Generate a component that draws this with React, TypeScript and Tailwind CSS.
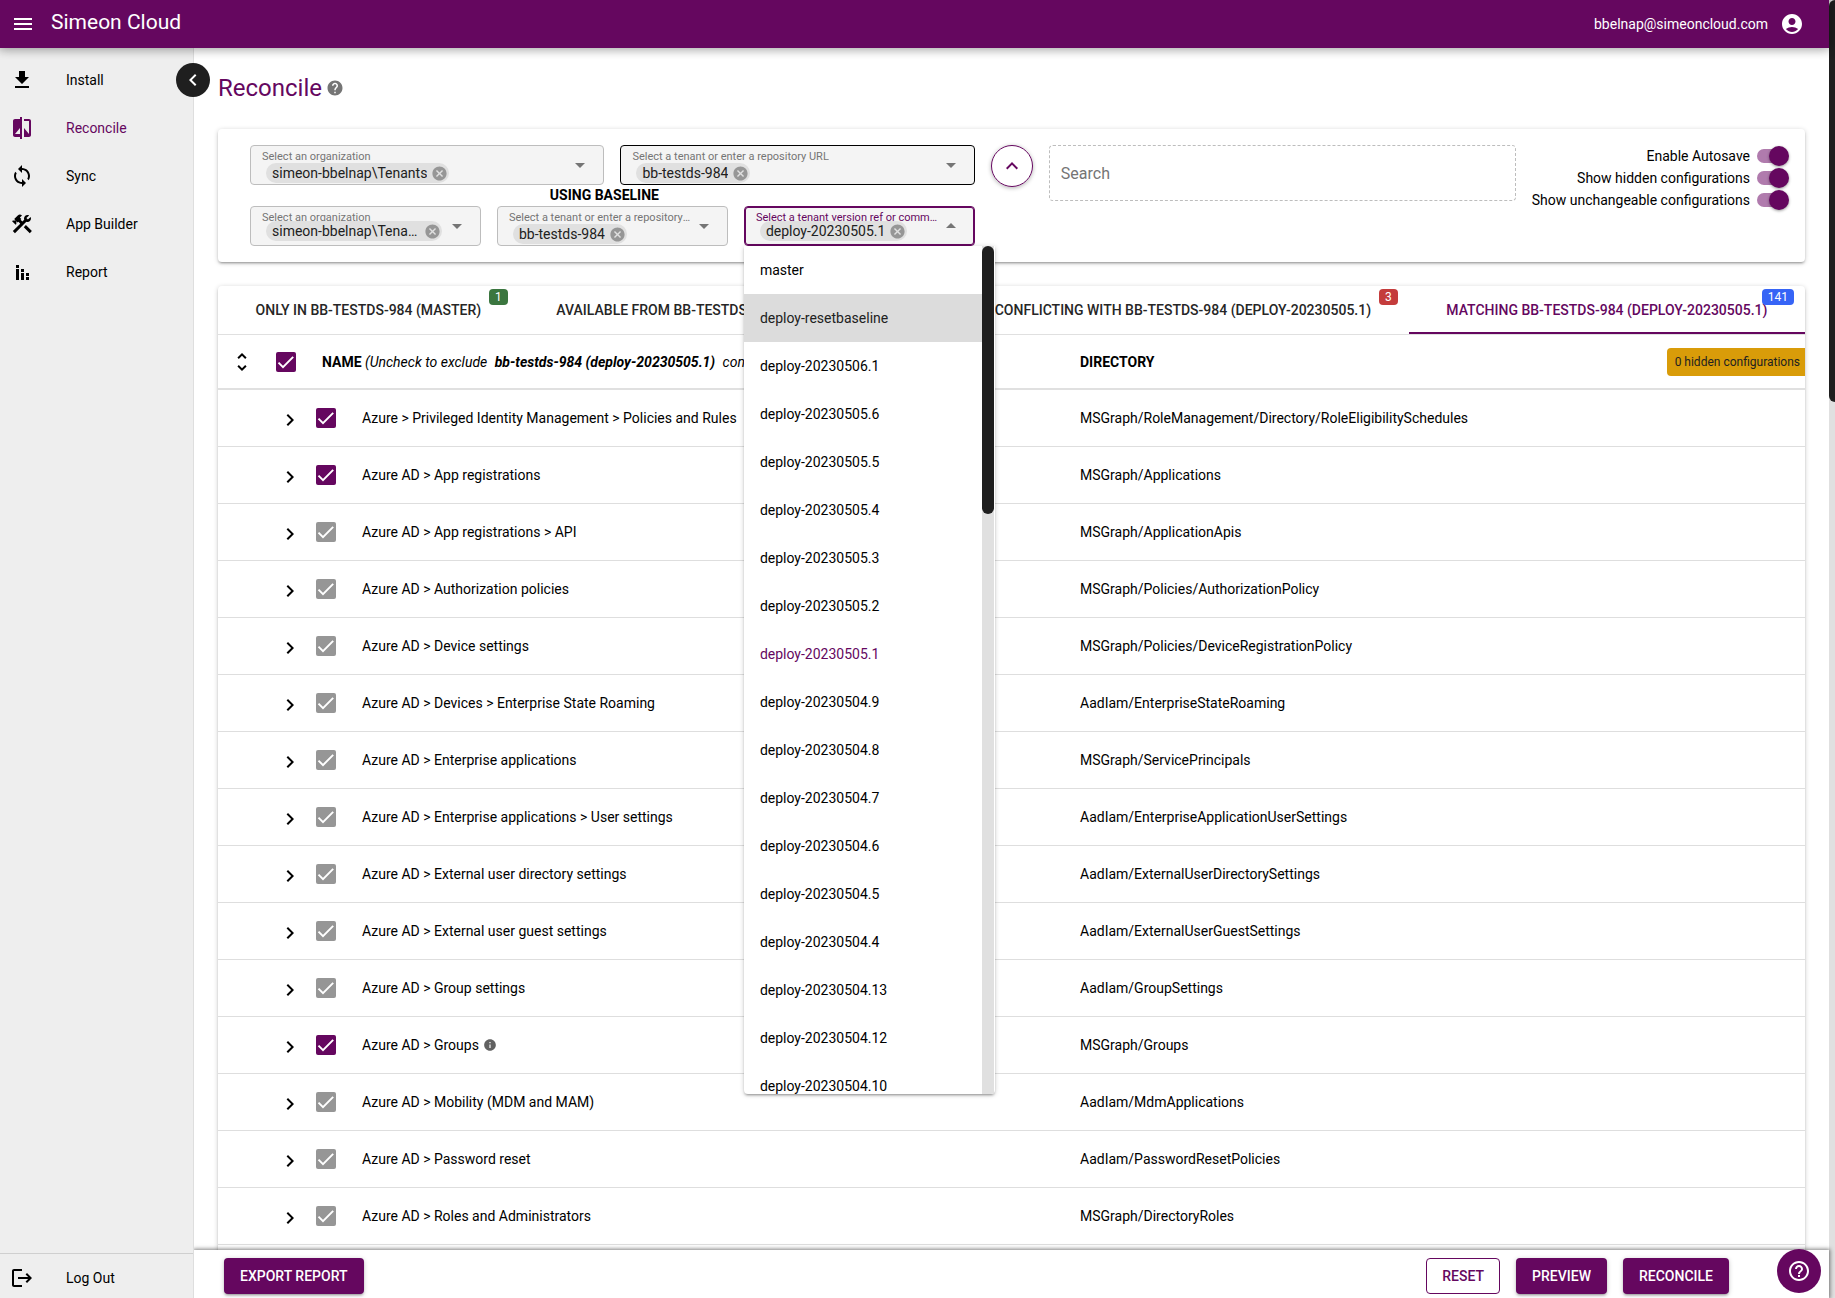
import React from "react";
import {
  MdMenu,
  MdAccountCircle,
  MdGetApp,
  MdCompare,
  MdSync,
  MdConstruction,
  MdLogout,
  MdChevronLeft,
  MdChevronRight,
  MdExpandLess,
  MdHelp,
  MdHelpOutline,
  MdCancel,
  MdArrowDropDown,
  MdArrowDropUp,
  MdUnfoldMore,
  MdInfo,
} from "react-icons/md";

function ReportIcon({ className }: { className?: string }) {
  return (
    <svg viewBox="0 0 24 24" className={className} fill="currentColor">
      <path d="M6 5h3v3H6zM6 9h3v11H6zM11 9h3v3h-3zM11 13h3v7h-3zM16 13h3v3h-3zM16 17h3v3h-3z" />
    </svg>
  );
}

const NAV = [
  { label: "Install", Icon: MdGetApp, active: false },
  { label: "Reconcile", Icon: MdCompare, active: true },
  { label: "Sync", Icon: MdSync, active: false },
  { label: "App Builder", Icon: MdConstruction, active: false },
  { label: "Report", Icon: ReportIcon, active: false },
];

const TABS = [
  { label: "ONLY IN BB-TESTDS-984 (MASTER)", count: "1", badge: "bg-[#3b763f]", active: false },
  { label: "AVAILABLE FROM BB-TESTDS-984 (DEPLOY-20230505.1)", count: "", badge: "", active: false },
  { label: "CONFLICTING WITH BB-TESTDS-984 (DEPLOY-20230505.1)", count: "3", badge: "bg-[#c43c3c]", active: false },
  { label: "MATCHING BB-TESTDS-984 (DEPLOY-20230505.1)", count: "141", badge: "bg-[#3664f6]", active: true },
];

const REFS = [
  "master",
  "deploy-resetbaseline",
  "deploy-20230506.1",
  "deploy-20230505.6",
  "deploy-20230505.5",
  "deploy-20230505.4",
  "deploy-20230505.3",
  "deploy-20230505.2",
  "deploy-20230505.1",
  "deploy-20230504.9",
  "deploy-20230504.8",
  "deploy-20230504.7",
  "deploy-20230504.6",
  "deploy-20230504.5",
  "deploy-20230504.4",
  "deploy-20230504.13",
  "deploy-20230504.12",
  "deploy-20230504.10",
];

type Row = { name: string; dir: string; editable?: boolean; info?: boolean };

const ROWS: Row[] = [
  { name: "Azure > Privileged Identity Management > Policies and Rules", dir: "MSGraph/RoleManagement/Directory/RoleEligibilitySchedules", editable: true },
  { name: "Azure AD > App registrations", dir: "MSGraph/Applications", editable: true },
  { name: "Azure AD > App registrations > API", dir: "MSGraph/ApplicationApis" },
  { name: "Azure AD > Authorization policies", dir: "MSGraph/Policies/AuthorizationPolicy" },
  { name: "Azure AD > Device settings", dir: "MSGraph/Policies/DeviceRegistrationPolicy" },
  { name: "Azure AD > Devices > Enterprise State Roaming", dir: "AadIam/EnterpriseStateRoaming" },
  { name: "Azure AD > Enterprise applications", dir: "MSGraph/ServicePrincipals" },
  { name: "Azure AD > Enterprise applications > User settings", dir: "AadIam/EnterpriseApplicationUserSettings" },
  { name: "Azure AD > External user directory settings", dir: "AadIam/ExternalUserDirectorySettings" },
  { name: "Azure AD > External user guest settings", dir: "AadIam/ExternalUserGuestSettings" },
  { name: "Azure AD > Group settings", dir: "AadIam/GroupSettings" },
  { name: "Azure AD > Groups", dir: "MSGraph/Groups", editable: true, info: true },
  { name: "Azure AD > Mobility (MDM and MAM)", dir: "AadIam/MdmApplications" },
  { name: "Azure AD > Password reset", dir: "AadIam/PasswordResetPolicies" },
  { name: "Azure AD > Roles and Administrators", dir: "MSGraph/DirectoryRoles" },
];

function Check({ label, disabled = false }: { label: string; disabled?: boolean }) {
  return (
    <span className="grid size-5 shrink-0">
      <input
        type="checkbox"
        aria-label={label}
        defaultChecked
        disabled={disabled}
        className="col-start-1 row-start-1 size-5 appearance-none rounded-xs bg-[#65075f] disabled:bg-[#969696]"
      />
      <svg viewBox="0 0 24 24" className="pointer-events-none col-start-1 row-start-1 m-px size-[18px]" fill="none" stroke="#fff" strokeWidth="2.6">
        <path d="M2 12.8 8 18.8 21.6 5.2" />
      </svg>
    </span>
  );
}

type FieldProps = {
  id: string;
  label: string;
  value: string;
  frame?: string;
  open?: boolean;
  clipped?: boolean;
  raised?: boolean;
  children?: React.ReactNode;
};

function Field({ id, label, value, frame = "border-[#bdbdbd]", open = false, clipped = false, raised = false, children }: FieldProps) {
  const Arrow = open ? MdArrowDropUp : MdArrowDropDown;
  return (
    <div className="relative min-w-0 flex-1">
      <div className={"flex h-10 items-center rounded border bg-[#f4f4f4] px-[11px] " + frame}>
        <div className="flex h-full min-w-0 flex-1 flex-col items-start">
          <label
            htmlFor={id}
            className={"h-[17px] max-w-full shrink-0 truncate text-[11px] leading-[22px] " + (raised ? "-mb-[3px] " : "") + (open ? "text-[#65075f]" : "text-[#757575]")}
          >
            {label}
          </label>
          <div className="ml-1 flex h-5 max-w-full shrink-0 items-center rounded-full bg-[#e0e0e0] pr-px pl-1.5">
            <select
              id={id}
              defaultValue={value}
              className={"h-5 min-w-0 appearance-none overflow-hidden bg-transparent text-sm leading-5 text-ellipsis text-[#212121] outline-none " + (clipped ? "w-[148px]" : "field-sizing-content")}
            >
              <option>{value}</option>
            </select>
            <button type="button" aria-label={"Remove " + value} className="ml-1 shrink-0 text-[#969696]">
              <MdCancel className="size-[17px]" />
            </button>
          </div>
        </div>
        <Arrow className="size-6 shrink-0 text-[#757575]" />
      </div>
      {children}
    </div>
  );
}

function Switch({ label }: { label: string }) {
  return (
    <label className="flex h-[22px] items-center justify-end gap-[7px] text-sm text-black">
      {label}
      <span className="flex h-5 w-8 items-center">
        <input
          type="checkbox"
          role="switch"
          defaultChecked
          className="relative h-[14px] w-7 appearance-none rounded-full bg-[#b07bad] before:absolute before:-top-[3px] before:left-3 before:size-5 before:rounded-full before:bg-[#65075f] before:shadow-[0_1px_3px_rgba(0,0,0,0.4)]"
        />
      </span>
    </label>
  );
}

function RefMenu() {
  return (
    <div className="absolute top-full left-0 z-20 flex h-[848px] w-[251px] overflow-hidden rounded-b bg-white shadow-[0_1px_5px_rgba(0,0,0,0.2),0_2px_2px_rgba(0,0,0,0.14),0_3px_1px_-2px_rgba(0,0,0,0.12)]">
      <ul role="listbox" aria-label="Tenant versions" className="min-w-0 flex-1">
        {REFS.map((r) => (
          <li
            key={r}
            role="option"
            aria-selected={r === "deploy-20230505.1"}
            className={
              "flex h-12 items-center px-4 text-sm " +
              (r === "deploy-resetbaseline" ? "bg-[#dcdcdc] text-[#212121]" : r === "deploy-20230505.1" ? "text-[#65075f]" : "text-black")
            }
          >
            {r}
          </li>
        ))}
      </ul>
      <div className="mr-px w-3 bg-[#e0e0e0]">
        <div className="h-[268px] rounded-full bg-[#1f1f1f]" />
      </div>
    </div>
  );
}

const CARD = "rounded bg-white shadow-[0_1px_5px_rgba(0,0,0,0.2),0_2px_2px_rgba(0,0,0,0.14),0_3px_1px_-2px_rgba(0,0,0,0.12)]";
const SOLID =
  "h-9 rounded bg-[#65075f] px-4 text-sm font-medium text-white shadow-[0_1px_5px_rgba(0,0,0,0.2),0_2px_2px_rgba(0,0,0,0.14),0_3px_1px_-2px_rgba(0,0,0,0.12)]";

export default function App() {
  return (
    <div className="flex h-screen overflow-hidden bg-white font-['Roboto',sans-serif] text-sm text-black">
      <div className="flex min-w-0 flex-1 flex-col">
        <header className="relative z-40 flex h-12 shrink-0 items-center bg-[#65075f] pr-[25px] pl-[11px] text-white shadow-[0_0_10px_2px_rgba(0,0,0,0.2),0_0_10px_rgba(0,0,0,0.24)]">
          <button type="button" aria-label="Menu">
            <MdMenu className="size-6" />
          </button>
          <span className="mb-1 ml-4 flex-1 text-[21px] leading-7">Simeon Cloud</span>
          <span className="text-sm">bbelnap@simeoncloud.com</span>
          <button type="button" aria-label="Account" className="ml-3">
            <MdAccountCircle className="size-6" />
          </button>
        </header>

        <div className="flex min-h-0 flex-1">
          <aside className="relative z-30 flex w-[194px] shrink-0 flex-col border-r border-[#dedede] bg-[#eeeeee]">
            <button
              type="button"
              aria-label="Collapse sidebar"
              className="absolute top-[15px] -right-[17px] flex size-[34px] items-center justify-center rounded-full bg-[#1f1f1f] text-white"
            >
              <MdChevronLeft className="size-6" />
            </button>
            <nav className="flex flex-1 flex-col pt-2">
              {NAV.map(({ label, Icon, active }) => (
                <a key={label} href="#" className={"flex h-12 items-center pl-2.5 " + (active ? "text-[#65075f]" : "text-black")}>
                  <Icon className="size-6" />
                  <span className="ml-8">{label}</span>
                </a>
              ))}
            </nav>
            <a href="#" className="flex h-[45px] items-center border-t border-[#cfcfcf] pt-1 pl-2.5">
              <MdLogout className="size-6" />
              <span className="ml-8">Log Out</span>
            </a>
          </aside>

          <div className="relative flex min-w-0 flex-1 flex-col">
            <main className="min-h-0 flex-1 overflow-hidden px-6 pt-6">
              <h1 className="mb-[25px] flex items-center gap-1 text-2xl leading-8 text-[#65075f]">
                Reconcile
                <MdHelp className="size-[18px] text-[#757575]" />
              </h1>

              <section className={"flex items-start gap-4 py-4 pr-4 pl-8 " + CARD}>
                <div className="min-w-0 flex-[725_1_0%]">
                  <div className="flex gap-4">
                    <Field id="org" label="Select an organization" value="simeon-bbelnap\Tenants" />
                    <Field id="tenant" label="Select a tenant or enter a repository URL" value="bb-testds-984" frame="border-black" />
                  </div>
                  <div className="pr-4 text-center leading-[21px] font-bold">USING BASELINE</div>
                  <div className="flex gap-4">
                    <Field id="base-org" label="Select an organization" value="simeon-bbelnap\Tenants" clipped raised />
                    <Field id="base-tenant" label="Select a tenant or enter a repository URL" value="bb-testds-984" />
                    <Field
                      id="base-ref"
                      label="Select a tenant version ref or commit hash"
                      value="deploy-20230505.1"
                      frame="border-[#65075f] ring-1 ring-inset ring-[#65075f]"
                      open
                      raised
                    >
                      <RefMenu />
                    </Field>
                  </div>
                </div>
                <button
                  type="button"
                  aria-label="Hide baseline"
                  className="flex size-[42px] shrink-0 items-center justify-center rounded-full border border-[#65075f] text-[#65075f] shadow-[0_1px_4px_rgba(0,0,0,0.3)]"
                >
                  <MdExpandLess className="size-6" />
                </button>
                <div className="min-w-0 flex-[467_1_0%]">
                  <input
                    type="search"
                    aria-label="Search"
                    placeholder="Search"
                    className="block h-14 w-full rounded border border-dashed border-[#bdbdbd] px-[11px] text-base placeholder:text-[#757575]"
                  />
                </div>
                <div className="flex shrink-0 flex-col">
                  <Switch label="Enable Autosave" />
                  <Switch label="Show hidden configurations" />
                  <Switch label="Show unchangeable configurations" />
                </div>
              </section>

              <section className={"mt-6 " + CARD}>
                <div role="tablist" className="flex h-[49px] border-b border-[#e0e0e0]">
                  {TABS.map((t) => (
                    <button
                      key={t.label}
                      type="button"
                      role="tab"
                      aria-selected={t.active}
                      className={
                        "relative flex-auto px-1 pt-0.5 text-sm font-medium whitespace-nowrap " +
                        (t.active ? "border-b-2 border-[#65075f] text-[#65075f]" : "border-b-2 border-transparent text-[#262626]")
                      }
                    >
                      {t.label}
                      {t.count && (
                        <span className={"absolute top-[3px] right-[11px] rounded px-1.5 text-xs leading-4 font-normal text-white " + t.badge}>{t.count}</span>
                      )}
                    </button>
                  ))}
                </div>
                <table className="w-full table-fixed border-collapse text-left">
                  <thead>
                    <tr className="h-[54px] border-b-2 border-[#e0e0e0]">
                      <th className="w-[846px] p-0 font-bold">
                        <div className="flex items-center pl-3">
                          <button type="button" aria-label="Expand all">
                            <MdUnfoldMore className="size-6" />
                          </button>
                          <span className="ml-[22px] flex">
                            <Check label="Select all" />
                          </span>
                          <span className="ml-[26px] whitespace-nowrap">
                            NAME{" "}
                            <em className="font-normal">
                              (Uncheck to exclude <b className="px-1">bb-testds-984 (deploy-20230505.1)</b> configurations)
                            </em>
                          </span>
                        </div>
                      </th>
                      <th className="p-0 pl-4 font-bold">
                        <div className="flex items-center justify-between">
                          DIRECTORY
                          <span className="rounded-l bg-[#d99c09] pr-[5px] pl-2 text-xs leading-7 font-normal text-[#212121]">0 hidden configurations</span>
                        </div>
                      </th>
                    </tr>
                  </thead>
                  <tbody>
                    {ROWS.map((r) => (
                      <tr key={r.name} className="h-[57px] border-b border-[#dedede]">
                        <td className="p-0">
                          <div className="flex items-center pl-[60px]">
                            <button type="button" aria-label={"Expand " + r.name} className="pt-1">
                              <MdChevronRight className="size-6" />
                            </button>
                            <span className="ml-3.5 flex">
                              <Check label={r.name} disabled={!r.editable} />
                            </span>
                            <span className="ml-[26px]">{r.name}</span>
                            {r.info && <MdInfo className="ml-1 size-[14px] text-[#616161]" />}
                          </div>
                        </td>
                        <td className="p-0 pl-4">{r.dir}</td>
                      </tr>
                    ))}
                  </tbody>
                </table>
                <div className="h-14" />
              </section>
            </main>

            <footer className="relative z-20 flex h-12 shrink-0 items-center gap-4 bg-white pt-1 pr-[100px] pl-[30px] shadow-[0_0_4px_1px_rgba(0,0,0,0.5)]">
              <button type="button" className={"mr-auto " + SOLID}>
                EXPORT REPORT
              </button>
              <button type="button" className="h-9 rounded border border-[#65075f] px-[15px] text-sm font-medium text-[#65075f]">
                RESET
              </button>
              <button type="button" className={SOLID}>
                PREVIEW
              </button>
              <button type="button" className={SOLID}>
                RECONCILE
              </button>
            </footer>
            <button
              type="button"
              aria-label="Help"
              className="absolute right-2 bottom-[5px] z-30 flex size-11 items-center justify-center rounded-full bg-[#65075f] text-white"
            >
              <MdHelpOutline className="size-6" />
            </button>
          </div>
        </div>
      </div>
      <div className="w-1.5 shrink-0 bg-[#e0e0e0]">
        <div className="h-[402px] rounded-l-full bg-[#1f1f1f]" />
      </div>
    </div>
  );
}
